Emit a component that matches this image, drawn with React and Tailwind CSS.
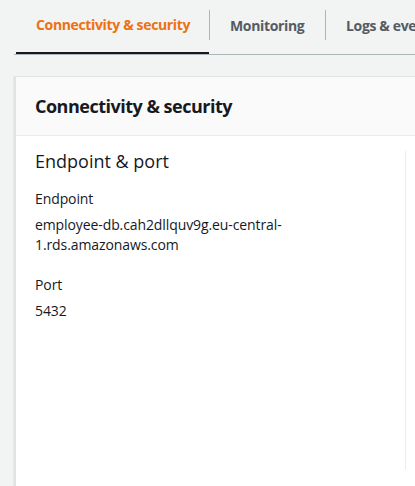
import React from 'react';

const tabs = [
  { label: 'Connectivity & security', w: 'w-[193px]' },
  { label: 'Monitoring', w: 'w-[115px]' },
  { label: 'Logs & events', w: 'w-[130px]' },
];

export default function App() {
  return (
    <div className="w-[415px] h-[486px] overflow-hidden bg-[#f2f3f3] text-[#16191f]" style={{ fontFamily: '"Open Sans", Roboto, Arial, sans-serif' }}>
      {/* Tabs */}
      <div className="ml-[14px] pt-[10px] border-b border-[#aab7b8] flex whitespace-nowrap">
        {tabs.map((t, i) => (
          <div key={t.label} className={`flex items-stretch shrink-0 ${i === 0 ? 'ml-[2px]' : ''}`}>
            {i > 0 && <div className="w-px h-[30px] bg-[#aab7b8]" />}
            <div
              className={`${t.w} h-[44px] px-[20px] pb-[14px] flex items-center text-[14px] font-bold ${
                i === 0 ? 'text-[#ec7211] border-b-[2px] border-[#16191f] -mb-px' : 'text-[#545b64]'
              }`}
            >
              <span className="mt-[1px] tracking-[-0.35px]">{t.label}</span>
            </div>
          </div>
        ))}
      </div>

      {/* Card */}
      <div className="ml-[14px] mt-[21px] w-[420px] h-[420px] bg-white border-l-2 border-t border-[#dfe3e3] shadow-[0_1px_1px_0_rgba(0,28,36,0.3)]">
        <div className="h-[59px] bg-[#fafafa] border-b border-[#eaeded] px-[19px] flex items-center">
          <h2 className="text-[18px] font-bold leading-[22px] tracking-[-0.5px] -mt-[1px]">Connectivity &amp; security</h2>
        </div>
        <div className="flex">
          <div className="w-[390px] pl-[19px] border-r border-[#eaeded] h-[319px] mt-[15px]">
            <h3 className="text-[18px] leading-[22px] -mt-[1px]">Endpoint &amp; port</h3>
            <div className="mt-[17px] text-[14px] leading-[20px] tracking-[-0.1px]">
              <div>Endpoint</div>
              <div className="mt-[6px]">employee-db.cah2dllquv9g.eu-central-<br />1.rds.amazonaws.com</div>
              <div className="mt-[20px]">Port</div>
              <div className="mt-[6px]">5432</div>
            </div>
          </div>
        </div>
      </div>
    </div>
  );
}
